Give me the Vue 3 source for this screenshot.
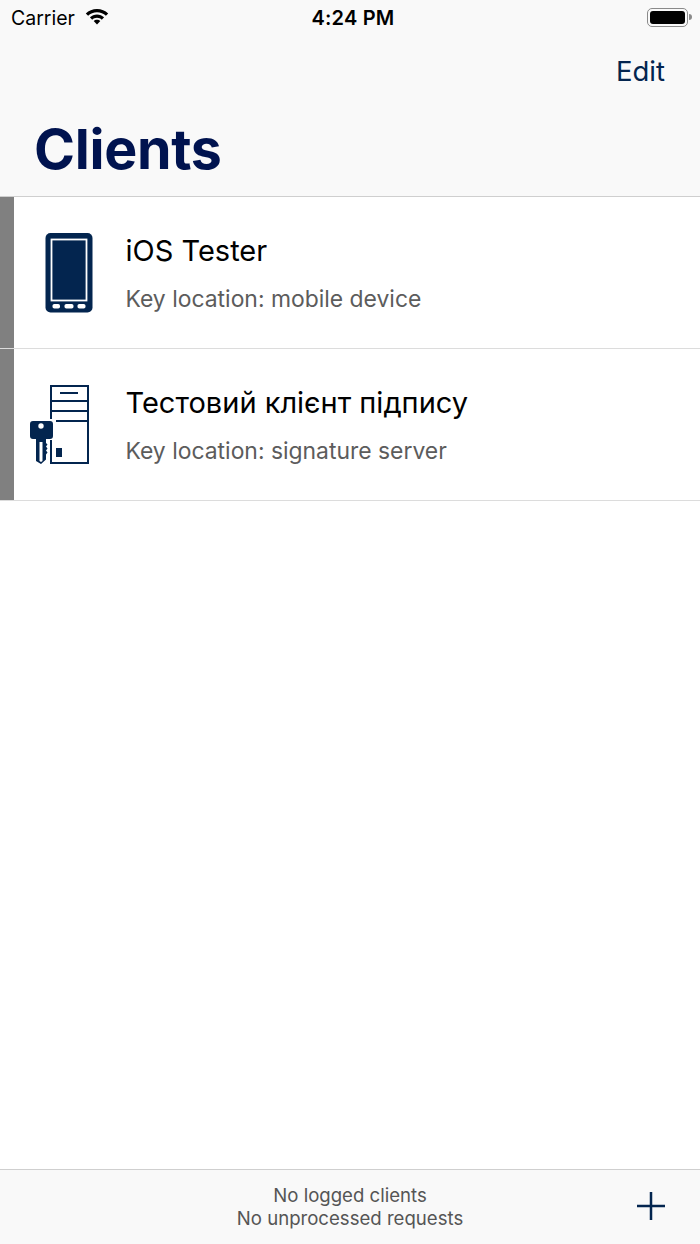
<template>
  <div class="screen">
    <header class="nav">
      <div class="status-bar">
        <div class="status-left">
          <span class="carrier">Carrier</span>
          <svg class="wifi" width="24" height="17" viewBox="0 0 24 17">
            <path d="M12 1C7.600 1 3.700 2.700.800 5.400l2.300 2.400C5.400 5.600 8.500 4.300 12 4.300s6.600 1.300 8.900 3.500l2.300-2.400C20.300 2.700 16.400 1 12 1z" fill="#000" />
            <path d="M12 6.500c-2.700 0-5.200 1.100-7.100 2.800l2.300 2.400c1.300-1.200 3-1.900 4.800-1.900s3.500.7 4.800 1.900l2.300-2.400C17.200 7.600 14.700 6.500 12 6.500z" fill="#000" />
            <path d="M12 11.800c-1.300 0-2.400.5-3.300 1.300L12 16.600l3.300-3.500c-.9-.8-2-1.300-3.300-1.300z" fill="#000" />
          </svg>
        </div>
        <span class="time">4:24 PM</span>
        <div class="battery">
          <span class="battery-body"><span class="battery-fill"></span></span>
          <span class="battery-tip"></span>
        </div>
      </div>
      <div class="nav-actions">
        <span class="edit">Edit</span>
      </div>
      <h1>Clients</h1>
    </header>

    <main class="list">
      <article v-for="client in clients" :key="client.name" class="row">
        <span class="row-mark"></span>
        <div class="row-icon">
          <svg v-if="client.type === 'mobile'" class="phone" width="48" height="80" viewBox="0 0 48 80">
            <rect x="0.500" width="47" height="79.500" rx="5" fill="#03254f" />
            <rect x="6.500" y="6.500" width="35" height="61" fill="none" stroke="#fff" stroke-width="1.800" />
            <rect x="7.500" y="71" width="7.500" height="4.500" rx="1.800" fill="#fff" />
            <rect x="19.500" y="71" width="9" height="4.500" rx="1.800" fill="#fff" />
            <rect x="32.500" y="71" width="8" height="4.500" rx="1.800" fill="#fff" />
          </svg>
          <svg v-else class="server" width="64" height="85" viewBox="0 0 64 85">
            <g fill="none" stroke="#03254f" stroke-width="2">
              <path d="M21 37V4h37v77H21V58" />
              <path d="M21 19h37M21 29h37M26 39h32" />
              <path d="M30 11h18" />
            </g>
            <rect x="26" y="66" width="6" height="9" fill="#03254f" />
            <path fill-rule="evenodd" fill="#03254f" d="M3 39h17a3 3 0 0 1 3 3v12a3 3 0 0 1-3 3h-4v4l1.500 1.500-1.500 2 1.500 2-1.500 2 1.500 2-1.500 2v5l-5 4.500-5-3V57H3a3 3 0 0 1-3-3V42a3 3 0 0 1 3-3zm8 2.300a2.700 2.700 0 1 0 0 5.400 2.700 2.700 0 0 0 0-5.400zM9.500 60v19l1.500 1 1.500-1V60z" />
          </svg>
        </div>
        <div class="row-text">
          <div class="row-title">{{ client.name }}</div>
          <div class="row-sub">Key location: {{ client.location }}</div>
        </div>
      </article>
    </main>

    <footer class="toolbar">
      <div class="toolbar-text">
        <div>No logged clients</div>
        <div>No unprocessed requests</div>
      </div>
      <svg class="plus" width="30" height="30" viewBox="0 0 30 30">
        <path d="M15 1v28M1 15h28" stroke="#03254f" stroke-width="2.500" fill="none" />
      </svg>
    </footer>
  </div>
</template>

<script setup>
const clients = [
  { name: 'iOS Tester', location: 'mobile device', type: 'mobile' },
  { name: 'Тестовий клієнт підпису', location: 'signature server', type: 'server' }
]
</script>

<style>
html, body {
  margin: 0;
  background: #fff;
}
</style>

<style scoped>
.screen {
  display: flex;
  flex-direction: column;
  width: 700px;
  height: 1244px;
  overflow: hidden;
  background: #fff;
  font-family: Inter, "Noto Sans", sans-serif;
}

.nav {
  flex: none;
  box-sizing: border-box;
  height: 197px;
  background: #f9f9f9;
  border-bottom: 1px solid #cfcfcf;
}

.status-bar {
  display: flex;
  align-items: center;
  justify-content: space-between;
  height: 36px;
  padding: 0 8px 0 11px;
  color: #000;
  position: relative;
}

.status-left {
  display: flex;
  align-items: center;
  gap: 10px;
}

.carrier {
  font-size: 19.500px;
  margin-top: -1px;
}

.wifi {
  margin-top: -3px;
}

.time {
  position: absolute;
  left: 6px;
  right: 0;
  text-align: center;
  font-size: 20px;
  font-weight: 600;
  letter-spacing: 0.200px;
}

.battery {
  display: flex;
  align-items: center;
  gap: 1px;
  margin-top: -2px;
}

.battery-body {
  box-sizing: border-box;
  width: 41px;
  height: 19px;
  padding: 2px;
  border: 1px solid #8a8a8a;
  border-radius: 5px;
}

.battery-fill {
  display: block;
  width: 100%;
  height: 100%;
  background: #000;
  border-radius: 3px;
}

.battery-tip {
  width: 3px;
  height: 6px;
  background: #8a8a8a;
  border-radius: 0 3px 3px 0;
}

.nav-actions {
  display: flex;
  justify-content: flex-end;
  padding: 17px 35px 0 0;
}

.edit {
  color: #03254f;
  font-size: 27.500px;
  line-height: 36px;
}

h1 {
  margin: 27px 0 0 34px;
  color: #00134f;
  font-size: 55.500px;
  font-weight: 700;
  line-height: 66px;
  letter-spacing: -0.300px;
}

.list {
  flex: 1;
}

.row {
  display: flex;
  align-items: center;
  box-sizing: border-box;
  height: 152px;
  border-bottom: 1px solid #dcdcdc;
}

.row-mark {
  align-self: stretch;
  width: 14px;
  background: #808080;
}

.row-icon {
  display: flex;
  justify-content: flex-end;
  width: 80px;
}

.row-icon svg {
  display: block;
}

.phone {
  margin-right: 1px;
}

.row-text {
  margin-left: 31.500px;
}

.row-title {
  color: #000;
  font-size: 29px;
  line-height: 38px;
}

.row-sub {
  margin-top: 15px;
  color: #5c5c5c;
  font-size: 22.900px;
  line-height: 28px;
}

.toolbar {
  flex: none;
  display: flex;
  align-items: center;
  justify-content: center;
  position: relative;
  box-sizing: border-box;
  height: 75px;
  background: #f9f9f9;
  border-top: 1px solid #cfcfcf;
}

.toolbar-text {
  color: #555;
  font-size: 18.600px;
  line-height: 23px;
  text-align: center;
}

.plus {
  position: absolute;
  right: 34px;
  top: 21px;
}
</style>
